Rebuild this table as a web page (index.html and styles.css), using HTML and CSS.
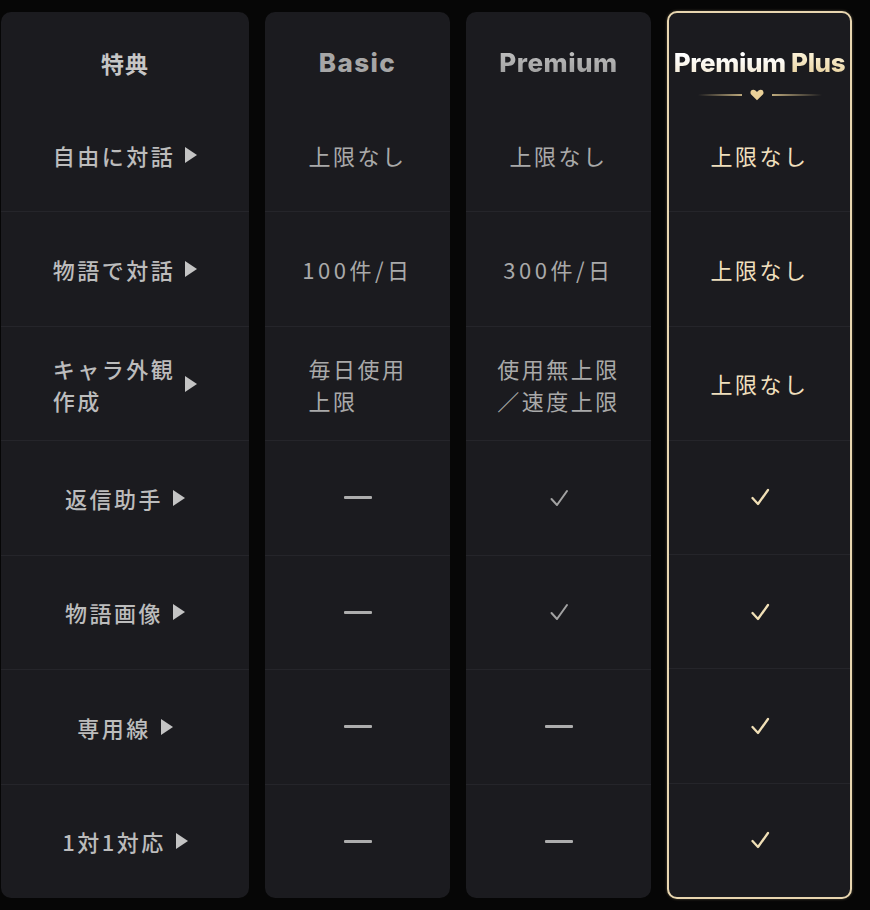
FILE: index.html
```html
<!DOCTYPE html>
<html lang="ja">
<head>
<meta charset="utf-8">
<title>プラン比較</title>
<link rel="stylesheet" href="styles.css">
</head>
<body>
<div class="table">
  <div class="col col-feature">
    <div class="head"><span class="head-jp">特典</span></div>
    <div class="cell label"><span class="lbl">自由に対話</span><span class="tri"></span></div>
    <div class="cell label"><span class="lbl">物語で対話</span><span class="tri"></span></div>
    <div class="cell label"><span class="lbl multi">キャラ外観<br>作成</span><span class="tri"></span></div>
    <div class="cell label"><span class="lbl">返信助手</span><span class="tri"></span></div>
    <div class="cell label"><span class="lbl">物語画像</span><span class="tri"></span></div>
    <div class="cell label"><span class="lbl">専用線</span><span class="tri"></span></div>
    <div class="cell label"><span class="lbl">1対1対応</span><span class="tri"></span></div>
  </div>

  <div class="col col-plan">
    <div class="head"><span class="plan-name basic">Basic</span></div>
    <div class="cell val">上限なし</div>
    <div class="cell val"><span class="count">100件/日</span></div>
    <div class="cell val"><span class="multi">毎日使用<br>上限</span></div>
    <div class="cell val"><span class="dash"></span></div>
    <div class="cell val"><span class="dash"></span></div>
    <div class="cell val"><span class="dash"></span></div>
    <div class="cell val"><span class="dash"></span></div>
  </div>

  <div class="col col-plan">
    <div class="head"><span class="plan-name premium">Premium</span></div>
    <div class="cell val">上限なし</div>
    <div class="cell val"><span class="count">300件/日</span></div>
    <div class="cell val"><span class="multi">使用無上限<br>／速度上限</span></div>
    <div class="cell val"><svg class="check" viewBox="0 0 20 20"><polyline points="2.5,11 8,17 18,3"/></svg></div>
    <div class="cell val"><svg class="check" viewBox="0 0 20 20"><polyline points="2.5,11 8,17 18,3"/></svg></div>
    <div class="cell val"><span class="dash"></span></div>
    <div class="cell val"><span class="dash"></span></div>
  </div>

  <div class="col col-plus">
    <div class="head head-plus">
      <span class="plan-name plus"><span class="pw">Premium</span> <span class="pg">Plus</span></span>
      <div class="ornament">
        <span class="orn-line left"></span>
        <svg class="heart" viewBox="0 0 12 10"><path d="M6 9.5 L1 4.6 C-0.2 3.3 0.4 0.6 2.8 0.6 C4.2 0.6 5.3 1.6 6 2.4 C6.7 1.6 7.8 0.6 9.2 0.6 C11.6 0.6 12.2 3.3 11 4.6 Z"/></svg>
        <span class="orn-line right"></span>
      </div>
    </div>
    <div class="cell val gold">上限なし</div>
    <div class="cell val gold">上限なし</div>
    <div class="cell val gold">上限なし</div>
    <div class="cell val gold"><svg class="check" viewBox="0 0 20 20"><polyline points="2.5,11 8,17 18,3"/></svg></div>
    <div class="cell val gold"><svg class="check" viewBox="0 0 20 20"><polyline points="2.5,11 8,17 18,3"/></svg></div>
    <div class="cell val gold"><svg class="check" viewBox="0 0 20 20"><polyline points="2.5,11 8,17 18,3"/></svg></div>
    <div class="cell val gold"><svg class="check" viewBox="0 0 20 20"><polyline points="2.5,11 8,17 18,3"/></svg></div>
  </div>
</div>
</body>
</html>
```

FILE: styles.css
```css
html, body {
  margin: 0;
  padding: 0;
  background: #060606;
}
body {
  width: 870px;
  height: 910px;
  overflow: hidden;
  font-family: "Noto Sans CJK JP", "Noto Sans", sans-serif;
}
.table {
  display: flex;
  align-items: flex-start;
  gap: 16px;
  padding: 12px 0 0 1px;
}
.col {
  display: flex;
  flex-direction: column;
  background: #1b1b1f;
  border-radius: 10px;
  height: 886px;
  box-sizing: border-box;
  overflow: hidden;
}
.col-feature { width: 248px; }
.col-plan { width: 185px; }
.col-plus {
  width: 185px;
  height: 888px;
  margin-top: -1px;
  border: 2px solid #e8d6b0;
  box-shadow: 0 0 3px rgba(230, 210, 166, 0.35);
  overflow: visible;
}
.head {
  height: 86px;
  flex: none;
  display: flex;
  flex-direction: column;
  align-items: center;
  padding-top: 37px;
  box-sizing: border-box;
}
.col-plus .head { height: 85px; padding-top: 36px; }
.head-jp {
  font-size: 23px;
  line-height: 28px;
  font-weight: 700;
  color: #c6c6c6;
  letter-spacing: 1px;
}
.plan-name {
  font-family: "Inter", "Lato", sans-serif;
  font-weight: 800;
  font-size: 26px;
  line-height: 28px;
}
.basic { color: #a6a6a6; letter-spacing: 1.4px; }
.premium {
  letter-spacing: 0.5px;
  background: linear-gradient(180deg, #c2c2c2, #9b9b9b);
  -webkit-background-clip: text;
  background-clip: text;
  color: transparent;
}
.plus { white-space: nowrap; letter-spacing: -0.4px; }
.plus .pw {
  background: linear-gradient(180deg, #ffffff 30%, #f1e6cd);
  -webkit-background-clip: text;
  background-clip: text;
  color: transparent;
}
.plus .pg {
  background: linear-gradient(180deg, #fbf1d6 20%, #e7cf98);
  -webkit-background-clip: text;
  background-clip: text;
  color: transparent;
}
.ornament {
  display: flex;
  align-items: center;
  gap: 8px;
  margin-top: 12px;
  height: 12px;
}
.orn-line {
  display: block;
  width: 44px;
  height: 2px;
}
.orn-line.left { background: linear-gradient(90deg, rgba(200, 180, 130, 0), #bda97c); }
.orn-line.right { background: linear-gradient(90deg, #bda97c, rgba(200, 180, 130, 0)); width: 50px; }
.heart {
  width: 14px;
  height: 12px;
  fill: #ebd198;
}
.cell {
  flex: 1 1 0;
  display: flex;
  align-items: center;
  justify-content: center;
  border-top: 1px solid #25252a;
  min-height: 0;
}
.col .head + .cell { border-top: none; }
.label {
  color: #bcbcbc;
  font-size: 22px;
  font-weight: 500;
  letter-spacing: 2.5px;
  gap: 8px;
}
.lbl { line-height: 32px; }
.lbl.multi { text-align: left; }
.tri {
  display: block;
  width: 0;
  height: 0;
  border-top: 8px solid transparent;
  border-bottom: 8px solid transparent;
  border-left: 12px solid #c4c4c4;
  margin-left: 2px;
}
.val {
  color: #a9a9a9;
  font-size: 22px;
  font-weight: 400;
  letter-spacing: 2.5px;
  line-height: 32px;
}
.val .count { letter-spacing: 3.5px; }
.val .multi { text-align: left; }
.val.gold { color: #efdfbd; }
.dash {
  display: block;
  width: 28px;
  height: 3px;
  background: #adadad;
  border-radius: 1px;
}
.check {
  width: 20px;
  height: 20px;
  fill: none;
  stroke: #a2a2a2;
  stroke-width: 2;
  stroke-linecap: round;
  stroke-linejoin: round;
}
.gold .check { stroke: #f0dfb6; stroke-width: 2.3; }
```
